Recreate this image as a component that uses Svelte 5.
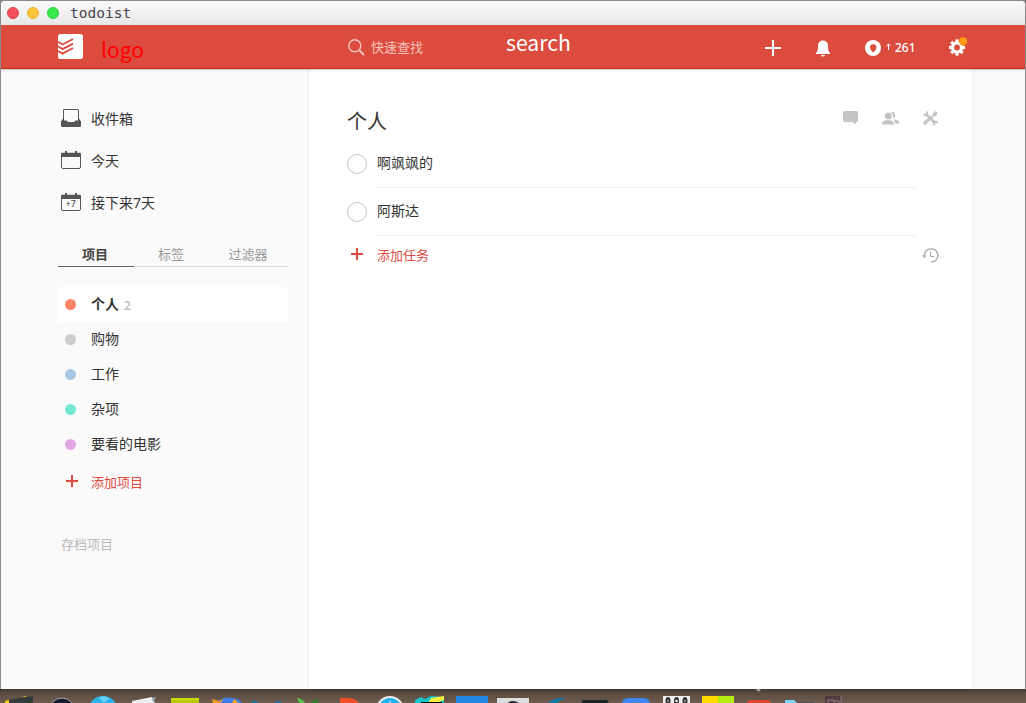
<script>
  const projects = [
    { name: '个人', color: '#ff8569', count: 2, active: true },
    { name: '购物', color: '#cccccc' },
    { name: '工作', color: '#a8c8e5' },
    { name: '杂项', color: '#74e8d3' },
    { name: '要看的电影', color: '#e3a7e3' }
  ];
  const tasks = ['啊飒飒的', '阿斯达'];
  const tabs = ['项目', '标签', '过滤器'];
  const teeth = [0, 45, 90, 135, 180, 225, 270, 315];
</script>

<div class="screen">
  <div class="window">
    <div class="titlebar">
      <i class="light red"></i><i class="light amber"></i><i class="light green"></i>
      <span class="title">todoist</span>
    </div>

    <header>
      <div class="brand">
        <svg width="26" height="26" viewBox="0 0 26 26">
          <rect x="0" y="0" width="25" height="25" rx="2.6" fill="#fff" />
          <g fill="none" stroke="#db4c3f" stroke-width="1.8">
            <path d="M0 7.7 4.500 10.500 15 5M0 12.300 4.500 15.100 15 9.600M0 16.900 4.500 19.600 15 14" />
          </g>
        </svg>
        <span class="logo-text">logo</span>
      </div>
      <div class="search">
        <svg width="17" height="17" viewBox="0 0 17 17" fill="none" stroke="#f3c0bb" stroke-width="1.5">
          <circle cx="6.8" cy="6.8" r="6" /><path d="m11 11 5 5" stroke-width="2" />
        </svg>
        <span class="quick">快速查找</span>
        <span class="search-text">search</span>
      </div>
      <div class="actions">
        <svg class="plus" width="16" height="16" viewBox="0 0 16 16"><path d="M8 0v16M0 8h16" stroke="#fff" stroke-width="2" /></svg>
        <svg class="bell" width="14" height="17" viewBox="0 0 14 17" fill="#fff">
          <path d="M7 .5C10 .5 12 2.800 12 6c0 4 .5 5.800 2 6.800V14H0v-1.200C1.500 11.800 2 10 2 6 2 2.800 4 .5 7 .5ZM5 15h4c-.3 1.100-1 1.600-2 1.600S5.300 16.100 5 15Z" />
        </svg>
        <div class="karma">
          <svg width="16" height="16" viewBox="0 0 16 16">
            <circle cx="8" cy="8" r="8" fill="#fff" />
            <path d="M8.200 12.700C7 11 5 9.400 5 7.400a3.200 3.200 0 0 1 6.400 0c0 2-2 3.600-3.200 5.300Z" fill="#db4c3f" />
          </svg>
          <svg width="5" height="7" viewBox="0 0 5 7" fill="none" stroke="#fff"><path d="M2.500 7V1M.3 3.200l2.200-2.200 2.200 2.200" /></svg>
          <span>261</span>
        </div>
        <svg class="gear" width="19" height="19" viewBox="0 0 19 19">
          <g transform="translate(8 10.500)">
            {#each teeth as angle}
              <rect x="-1.600" y="-8.100" width="3.200" height="4" fill="#fff" transform="rotate({angle})" />
            {/each}
            <circle r="4.500" fill="none" stroke="#fff" stroke-width="3.200" />
          </g>
          <circle cx="14.100" cy="4.300" r="4.100" fill="#ff9a14" />
        </svg>
      </div>
    </header>

    <div class="body">
      <aside>
        <nav>
          <div class="nav-item">
            <svg width="20" height="20" viewBox="0 0 20 20">
              <path d="M2.500 13V2q0-.5.500-.5h14q.5 0 .5.500v11" fill="none" stroke="#555" />
              <path d="M2 10.500V12.500h3.500c.8 0 .8 1.500 1.800 1.500h5.400c1 0 1-1.500 1.800-1.500H18v-2l2 3V17.500c0 1-.6 1.500-1.500 1.500h-17C.6 19 0 18.500 0 17.500V13.500Z" fill="#555" />
            </svg>
            <span>收件箱</span>
          </div>
          <div class="nav-item">
            <svg width="20" height="20" viewBox="0 0 20 20">
              <rect x=".5" y="3.500" width="19" height="15" rx="1.500" fill="none" stroke="#555" />
              <path d="M0 6.900V4q0-1.300 1.300-1.300H4V1h2v1.700h8V1h2v1.700h2.700Q20 2.700 20 4v2.900Z" fill="#555" />
            </svg>
            <span>今天</span>
          </div>
          <div class="nav-item">
            <svg width="20" height="20" viewBox="0 0 20 20">
              <rect x=".5" y="3.500" width="19" height="15" rx="1.500" fill="none" stroke="#555" />
              <path d="M0 6.900V4q0-1.300 1.300-1.300H4V1h2v1.700h8V1h2v1.700h2.700Q20 2.700 20 4v2.900Z" fill="#555" />
              <text x="4.500" y="15" font-size="9" font-weight="500" fill="#555">+7</text>
            </svg>
            <span>接下来7天</span>
          </div>
        </nav>

        <div class="tabs">
          {#each tabs as tab, i}<span class:current={i === 0}>{tab}</span>{/each}
        </div>

        <div class="projects">
          {#each projects as project}
            <div class="project" class:active={project.active}>
              <i style="background: {project.color}"></i>
              <span>{project.name}</span>
              {#if project.count}<small>{project.count}</small>{/if}
            </div>
          {/each}
        </div>
        <div class="add-project">
          <svg width="12" height="12" viewBox="0 0 12 12"><path d="M6 0v12M0 6h12" stroke="#db4c3f" stroke-width="2" /></svg>
          <span>添加项目</span>
        </div>
        <div class="archived">存档项目</div>
      </aside>

      <main>
        <div class="heading">
          <h1>个人</h1>
          <div class="tools">
            <svg width="15" height="14" viewBox="0 0 15 14"><path d="M1.500 0h12Q15 0 15 1.500v8q0 1.500-1.500 1.500H13v2.600L9.300 11H1.500Q0 11 0 9.500v-8Q0 0 1.500 0Z" fill="#c4c4c4" /></svg>
            <svg width="18" height="14" viewBox="0 0 18 14" fill="#c4c4c4">
              <circle cx="6.300" cy="5" r="3.500" />
              <path d="M8.500 1A3.400 3.400 0 1 1 10.800 7.600Q12 3.300 8.500 1ZM0 13.500c0-3 2-4.300 6-4.300s6 1.300 6 4.300ZM11.500 8.500c3.500-.4 5.800.8 5.800 4H13c0-2-.4-3-1.500-4Z" />
            </svg>
            <svg class="wrench" width="15" height="15" viewBox="0 0 15 15">
              <g fill="none" stroke="#c4c4c4">
                <path d="m4 4 7 7" stroke-width="2.700" />
                <path d="M.8 3.200Q3.500 5.500 4 3.500T3.200.8M11.800 14.200q-2-2.700-.2-3.200t3.200.8" stroke-width="2.200" />
                <path d="m1.500 13.700 1-2.500L6.500 8" stroke-width="3.200" />
                <path d="m7.500 7.500 4-4" stroke-width="3" stroke-dasharray="2.700 .8" />
                <path d="m11 4 2.800-2.800" stroke-width="3.200" />
              </g>
            </svg>
          </div>
        </div>
        {#each tasks as task}
          <div class="task"><i></i><div>{task}</div></div>
        {/each}
        <div class="add-task">
          <svg width="12" height="12" viewBox="0 0 12 12"><path d="M6 0v12M0 6h12" stroke="#db4c3f" stroke-width="2" /></svg>
          <span>添加任务</span>
          <svg class="history" width="17" height="15" viewBox="0 0 17 15" fill="none" stroke="#aaa">
            <path d="M2.300 8C2.300 3.500 5.200.8 9 .8c4 0 6.900 2.800 6.900 6.700S13 14.200 9 14.200" stroke-width="1.300" />
            <path d="M8.500 3.500V8.500h3.700" />
            <path d="M0 7.500h4.800L2.400 10Z" fill="#aaa" stroke="none" />
          </svg>
        </div>
      </main>
      <div class="gutter"></div>
    </div>
  </div>

  <div class="dock">
    <svg width="1026" height="14" viewBox="0 0 1026 14">
      <path d="m5 14 3-3 25-4v7Z" fill="#353c3d" /><path d="M5 14v-2l4-1v3ZM22 8l4-1v1Z" fill="#f7d000" />
      <circle cx="62" cy="22" r="13" fill="#171b2e" stroke="#aaa" />
      <circle cx="103" cy="22" r="15" fill="#29b6ed" /><path d="M99 9q6-4 10 1l-5 4Z" fill="#65cff5" />
      <path d="m132 12 20-4 3 6h-23Z" fill="#eef0f2" /><path d="m152 9 4-1-3 6Z" fill="#9aabb8" />
      <path d="M171 9h28v5h-28Z" fill="#b8c900" /><path d="M171 9h28v2h-28Z" fill="#c6dc00" />
      <path d="M215 14q10-7 18-5 7 1 9 5Z" fill="#3e7be3" /><path d="m212 10 7 2 5-2-4 4h-7ZM234 10l5 4h-7Z" fill="#f39b21" />
      <path d="m251 11 7 2v1h-5ZM275 13l6-1v2h-7Z" fill="#1474af" />
      <path d="M297 9q5 0 8 5h-6Z" fill="#5dbd4c" /><path d="m311 13 7-3v4h-7Z" fill="#2c7e2c" />
      <path d="M340 9q16-1 19 5h-19Z" fill="#ed5026" />
      <circle cx="390" cy="21" r="13" fill="#20b4ef" stroke="#eee" stroke-width="2" /><path d="M390 12v2" stroke="#fff" />
      <path d="m415 11 6-3 4 2 6-3 13 1v6h-29Z" fill="#12c5cc" /><path d="m431 9 13-2v4l-8 3h-8Z" fill="#f9ee3e" /><path d="M421 13h21v1h-21Z" fill="#000" />
      <path d="M456 7h32v7h-32Z" fill="#2188e1" />
      <path d="M497 9h32v5h-32Z" fill="#ddd" /><circle cx="513" cy="21" r="9" fill="#292a34" />
      <path d="M548 13q10-5 19-4-6 1-10 5Z" fill="#1778ab" />
      <path d="M582 11h26v3h-26Z" fill="#101719" stroke="#3a484a" />
      <path d="M622 14q1-5 7-5h14q6 0 7 5Z" fill="#4185f4" />
      <path d="M663 7h27v7h-27Z" fill="#eee" /><g fill="#333"><ellipse cx="668" cy="12" rx="2.500" ry="4" /><ellipse cx="676.500" cy="12" rx="2.500" ry="4" /><ellipse cx="685" cy="12" rx="2.500" ry="4" /></g>
      <g fill="#aaa"><circle cx="668" cy="12" r="1" /><circle cx="676.500" cy="12" r="1.200" fill="#fff" /><circle cx="685" cy="12" r="1" /></g>
      <path d="M702 7h16v7h-16Z" fill="#ffdc00" /><path d="M718 7h16v7h-16Z" fill="#b8ed14" />
      <path d="M747 14q1-3 4-3h16q3 0 4 3Z" fill="#e34432" /><path d="M756 0h5l-2.500 3Z" fill="#aaa" />
      <path d="M785 11h9l3 3h-12Z" fill="#77d5f5" /><path d="M797 13h17v1h-17Z" fill="#4c4f50" />
      <path d="M825 7h16v7h-16Z" fill="#543b40" /><path d="M828 14v-3h6v3M834 12h5v2M841 7v7" fill="none" stroke="#947f82" />
    </svg>
  </div>
</div>

<style>
  :global(body) { margin: 0; overflow: hidden; }
  .screen { width: 1026px; height: 703px; display: flex; flex-direction: column; overflow: hidden; background: #85807d; color: #333; font: 14px/20px "Noto Sans", "Noto Sans CJK SC", sans-serif; }
  svg { display: block; flex: none; }
  .window { box-sizing: border-box; height: 689px; display: flex; flex-direction: column; border: 1px solid #8b898b; border-bottom: 0; border-radius: 5px 5px 0 0; overflow: hidden; background: #fff; }
  .titlebar { height: 24px; display: flex; align-items: center; padding-left: 6px; background: linear-gradient(#fafafa, #e8e8e8); }
  .light { width: 12px; height: 12px; border-radius: 50%; margin-right: 8px; box-sizing: border-box; }
  .red { background: #f64f57; border: 1px solid #df454c; }
  .amber { background: #fcc438; border: 1px solid #e7af2c; }
  .green { background: #36e84b; border: 1px solid #2bd33e; }
  .title { margin-left: 3px; color: #4b4550; font: 14.500px/24px "DejaVu Sans Mono", monospace; }
  header { box-sizing: border-box; height: 44px; flex: none; display: flex; background: #db4c3f; border-bottom: 1px solid #c22b12; box-shadow: 0 1px 2px #0003; z-index: 1; color: #fff; }
  .brand { width: 290px; padding: 9px 0 0 57px; display: flex; align-items: flex-start; box-sizing: border-box; height: 43px; }
  .logo-text { margin-left: 17px; color: #f00; font: 21px/28px "Noto Sans CJK SC", sans-serif; padding-top: 1px; }
  .search { width: 418px; padding: 2px 0 0 57px; box-sizing: border-box; display: flex; align-items: center; height: 43px; }
  .quick { margin-left: 6px; width: 135px; color: #f3c0bb; font: 13px/20px "Noto Sans CJK SC", sans-serif; padding-bottom: 2px; }
  .search-text { font: 21.200px/28px "Noto Sans CJK SC", sans-serif; padding-bottom: 11px; }
  .actions { display: flex; align-items: center; height: 45px; }
  .plus { margin-left: 56px; }
  .bell { margin: 1px 0 0 35px; }
  .karma { width: 84px; margin-left: 35px; display: flex; align-items: center; font: 500 12px/20px "Noto Sans", sans-serif; }
  .karma svg + svg { margin: 0 4px 2px 5px; }
  .gear { margin-bottom: 2px; }
  .body { flex: 1; display: flex; }
  aside { box-sizing: border-box; width: 308px; padding: 29px 20px 0 57px; background: #fafafa; border-right: 1px solid #eee; }
  .nav-item { height: 42px; display: flex; align-items: center; gap: 10px; padding-left: 3px; }
  .nav-item svg { margin-bottom: 2px; }
  .nav-item svg text { font-family: "Noto Sans", sans-serif; }
  .tabs { margin-top: 18px; height: 25px; display: grid; grid-template-columns: 76px 76px 78px; text-align: center; font-size: 13px; line-height: 24px; color: #999; box-shadow: inset 0 -1px #ddd; }
  .tabs span { padding-right: 2px; }
  .tabs .current { color: #444; font-weight: 700; box-shadow: inset 0 -1px #666; margin-right: 0; }
  .projects { margin-top: 20px; }
  .project { height: 35px; display: flex; align-items: center; padding-left: 7px; border-radius: 2px; }
  .project i { width: 11px; height: 11px; border-radius: 50%; margin-right: 15px; }
  .project span { padding-bottom: 1px; }
  .active { background: #fff; font-weight: 700; }
  .project small { margin: 2px 0 0 5px; color: #b8b8b8; font-size: 12px; font-weight: 500; }
  .add-project { height: 38px; display: flex; align-items: center; gap: 13px; padding-left: 8px; color: #db4c3f; font-size: 13px; }
  .add-project span { padding-top: 1px; }
  .archived { padding: 34px 0 0 3px; color: #bbb; font-size: 13px; }
  main { box-sizing: border-box; width: 664px; padding: 29px 33px 0 38px; border-right: 1px solid #eee; background: #fff; }
  .heading { height: 42px; display: flex; justify-content: space-between; align-items: center; }
  h1 { margin: 4px 0 0; font: 400 20px/28px "Noto Sans CJK SC", sans-serif; }
  .tools { display: flex; align-items: center; gap: 24px; padding-bottom: 2px; }
  .wrench { margin: 0 1px 0 -1px; }
  .task { height: 48px; display: flex; align-items: center; }
  .task i { width: 18px; height: 18px; border: 1px solid #c6c6c6; border-radius: 50%; margin-right: 10px; }
  .task div { box-sizing: border-box; width: 539px; height: 48px; line-height: 46px; border-bottom: 1px solid #eee; }
  .add-task { height: 38px; display: flex; align-items: center; padding-left: 4px; color: #db4c3f; font-size: 13px; }
  .add-task svg:first-child { margin-bottom: 2px; }
  .add-task span { margin-left: 14px; }
  .history { margin: 1px 0 0 auto; }
  .gutter { flex: 1; background: #fafafa; }
  .dock { height: 14px; background: linear-gradient(#40352d, #5c4c40 4px, #6e5c4f); }
</style>
